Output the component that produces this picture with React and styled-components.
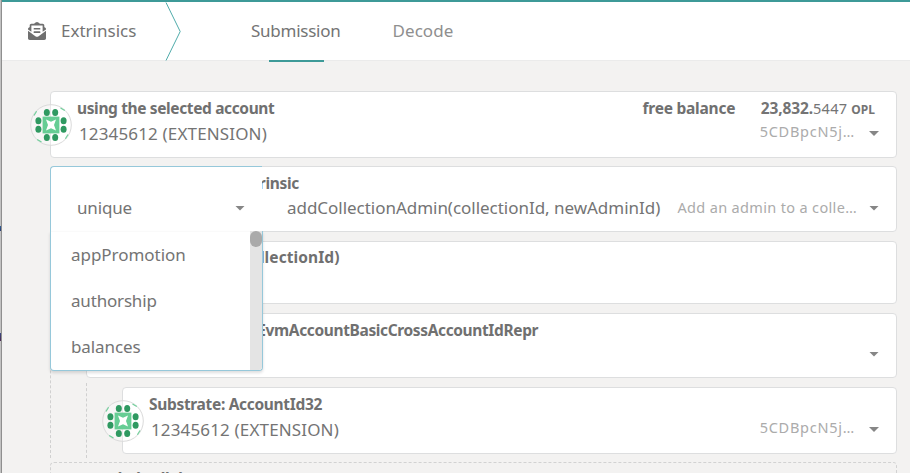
import React from 'react';
import styled, { createGlobalStyle } from 'styled-components';
import { FaEnvelopeOpenText } from 'react-icons/fa';

const GlobalStyle = createGlobalStyle`
  * { box-sizing: border-box; }
  body {
    margin: 0;
    overflow: hidden;
    background: #f3f2f1;
    color: #747474;
    font-family: 'Noto Sans', 'Open Sans', sans-serif;
  }
`;

const Page = styled.div`
  display: grid;
  grid-template-columns: 2px 1fr;
  width: 100%;
  height: 473px;
  overflow: hidden;
`;

const WindowEdge = styled.div`
  border-right: 1px solid #8f8f8f;
  background: linear-gradient(
    #c2c2c2 226px, #2f5f96 226px, #2d3f70 231px, #c2c2c2 231px,
    #c2c2c2 333px, #3a4a86 333px, #4a2850 341px, #c2c2c2 341px
  );
`;

const Main = styled.div`
  min-width: 0;
`;

const Header = styled.header`
  display: flex;
  height: 61px;
  background: #fff;
  border-top: 2px solid #3d9a98;
  border-bottom: 1px solid #ebebeb;
`;

const Section = styled.div`
  display: flex;
  align-items: center;
  width: 163px;
  height: 58px;
  padding-left: 26px;
  gap: 15px;
  font-size: 17px;
  line-height: 24px;
  letter-spacing: 0;

  svg { color: #6f6f6f; }
`;

const Chevron = styled.svg`
  display: block;
  width: 18px;
  height: 59px;
  fill: none;
  stroke: #4fabaa;
`;

const Tabs = styled.nav`
  display: flex;
  gap: 52px;
  margin-left: 68px;
`;

const Tab = styled.a`
  position: relative;
  display: flex;
  align-items: center;
  height: 58px;
  font-size: 17px;
  line-height: 24px;
  letter-spacing: ${(p) => (p.$active ? '-0.25px' : '0.05px')};
  color: ${(p) => (p.$active ? '#747474' : '#8f8f8f')};

  &::after {
    content: '';
    display: ${(p) => (p.$active ? 'block' : 'none')};
    position: absolute;
    left: 17.5px;
    bottom: -2px;
    width: 55px;
    height: 2px;
    background: #3d9a98;
  }
`;

const Content = styled.main`
  padding: 30px 13px 0 48px;
`;

const Card = styled.section`
  position: relative;
  display: flex;
  flex-direction: column;
  height: ${(p) => p.$height}px;
  margin-top: ${(p) => p.$gap || 0}px;
  margin-left: ${(p) => p.$indent || 0}px;
  padding: ${(p) => p.$top ?? 6}px 17px 0 26px;
  background: ${(p) => (p.$dashed ? 'transparent' : '#fff')};
  border: 1px ${(p) => (p.$dashed ? 'dashed #d2d2d2' : 'solid #dddedf')};
  border-radius: 4px;
`;

const Group = styled.div`
  margin-left: ${(p) => p.$indent || 0}px;
  margin-top: ${(p) => p.$gap}px;
  padding: ${(p) => p.$pad || 0};
  border-left: 1px dashed #d0d0d0;
`;

const LabelRow = styled.div`
  display: flex;
  justify-content: space-between;
  height: 20px;
`;

const Label = styled.span`
  padding-left: ${(p) => p.$offset || 0}px;
  font-size: 15.5px;
  font-weight: 700;
  line-height: 20px;
  letter-spacing: ${(p) => p.$spacing}px;
  white-space: nowrap;
  color: #707070;
`;

const Balance = styled.div`
  display: flex;
  align-items: baseline;
  gap: 25.5px;
  margin-right: 4px;
`;

const Amount = styled.span`
  font-size: 14.5px;
  line-height: 20px;
  letter-spacing: 0.3px;

  b { font-size: 15.5px; letter-spacing: -0.12px; }
`;

const Unit = styled.span`
  margin-left: 4px;
  font-size: 12px;
  font-weight: 700;
  letter-spacing: 0;
`;

const ValueRow = styled.div`
  display: flex;
  align-items: center;
  height: 24px;
  margin-top: ${(p) => p.$top}px;
  padding-left: ${(p) => p.$offset || 0}px;
`;

const Value = styled.span`
  flex: 1;
  font-size: 17px;
  line-height: 24px;
  letter-spacing: ${(p) => p.$spacing || 0}px;
  white-space: nowrap;
`;

const Hint = styled.span`
  margin: ${(p) => p.$lift}px ${(p) => p.$right}px 0 0;
  font-size: 14.5px;
  letter-spacing: ${(p) => p.$spacing}px;
  line-height: 24px;
  white-space: nowrap;
  color: #ababab;
`;

const Caret = styled.i`
  width: 10px;
  height: 5px;
  background: #868686;
  clip-path: polygon(0 0, 100% 0, 50% 100%);
`;

const AvatarSvg = styled.svg`
  position: absolute;
  top: 12px;
  left: -21px;
  width: 42px;
  height: 42px;
`;

const Dropdown = styled.div`
  position: absolute;
  z-index: 2;
  top: -1px;
  left: -1px;
  width: 213px;
`;

const DropdownHead = styled.div`
  display: flex;
  align-items: center;
  width: 212px;
  height: 66px;
  padding: 17px 17px 0 26px;
  background: #fff;
  border: 1px solid #96c8da;
  border-width: 1px 0 0 1px;
  border-radius: 4px 0 0 0;
`;

const DropdownList = styled.div`
  display: grid;
  grid-template-columns: 1fr 12px;
  height: 140px;
  margin-top: -1px;
  overflow: hidden;
  background: #fff;
  border: 1px solid #96c8da;
  border-top: 0;
  border-radius: 0 0 4px 4px;
  box-shadow: 0 2px 3px rgba(34, 36, 38, 0.15);
`;

const Options = styled.div`
  border-top: 1px solid #fafafa;
`;

const Option = styled.div`
  height: 46px;
  padding-left: 20px;
  font-size: 17px;
  line-height: 46px;
  letter-spacing: ${(p) => p.$spacing}px;
`;

const Scrollbar = styled.div`
  background: #e4e4e4;

  &::before {
    content: '';
    display: block;
    height: 16px;
    border-radius: 6px;
    background: #aaa;
  }
`;

const DOTS = [-4.2, 4.2];

function Avatar() {
  return (
    <AvatarSvg viewBox="-21 -21 42 42">
      <circle r="20.3" fill="#fff" fillOpacity="0.35" stroke="#dadada" />
      {DOTS.map((d) => (
        <g key={d} fill="#2f9961">
          <ellipse cx={d} cy="-12.6" rx="3" ry="3.5" />
          <ellipse cx={d} cy="12.6" rx="3" ry="3.5" />
          <ellipse cx="-12.6" cy={d} rx="3" ry="3.5" />
          <ellipse cx="12.6" cy={d} rx="3" ry="3.5" />
        </g>
      ))}
      <rect x="-8.4" y="-8.4" width="16.8" height="16.8" fill="#66cd94" />
      <path d="M-5-5.5L0-3.2 5-5.5 3 0 5 5.5 0 3.2-5 5.5-3 0Z" fill="#fff" />
      <path
        d="M-17-9.5L-14.4-13.8M9.5-17L13.8-14.4M17 9.5L14.4 13.8M-9.5 17L-13.8 14.4"
        stroke="#72d09c"
        strokeWidth="1.2"
      />
    </AvatarSvg>
  );
}

function AccountValue() {
  return (
    <ValueRow $top={3.5} $offset={2}>
      <Value $spacing={0.15}>12345612 (EXTENSION)</Value>
      <Hint $spacing={0.75} $right={14} $lift={-5}>5CDBpcN5j…</Hint>
      <Caret />
    </ValueRow>
  );
}

export default function App() {
  return (
    <Page>
      <GlobalStyle />
      <WindowEdge />
      <Main>
        <Header>
          <Section>
            <FaEnvelopeOpenText size={18} />
            <span>Extrinsics</span>
          </Section>
          <Chevron viewBox="0 0 18 59">
            <path d="M1 0.5L15.2 29.5L1 58.5" />
          </Chevron>
          <Tabs>
            <Tab $active>Submission</Tab>
            <Tab>Decode</Tab>
          </Tabs>
        </Header>
        <Content>
          <Card $height={67}>
            <Avatar />
            <LabelRow>
              <Label $spacing={-0.37}>using the selected account</Label>
              <Balance>
                <Label $spacing={-0.23}>free balance</Label>
                <Amount>
                  <b>23,832.</b>5447<Unit>OPL</Unit>
                </Amount>
              </Balance>
            </LabelRow>
            <AccountValue />
          </Card>

          <Card $height={66} $gap={8}>
            <LabelRow>
              <Label $spacing={-0.3}>submit the following extrinsic</Label>
            </LabelRow>
            <ValueRow $top={3} $offset={210}>
              <Value $spacing={-0.03}>addCollectionAdmin(collectionId, newAdminId)</Value>
              <Hint $spacing={0.34} $right={12} $lift={-3}>Add an admin to a colle…</Hint>
              <Caret />
            </ValueRow>
            <Dropdown>
              <DropdownHead>
                <Value $spacing={-0.16}>unique</Value>
                <Caret />
              </DropdownHead>
              <DropdownList>
                <Options>
                  <Option $spacing={-0.04}>appPromotion</Option>
                  <Option $spacing={-0.18}>authorship</Option>
                  <Option $spacing={-0.1}>balances</Option>
                </Options>
                <Scrollbar />
              </DropdownList>
            </Dropdown>
          </Card>

          <Group $gap={9}>
            <Card $height={63} $indent={-1} $top={5}>
              <LabelRow>
                <Label $spacing={0.08} $offset={25}>collectionId: u32 (CollectionId)</Label>
              </LabelRow>
            </Card>
            <Card $height={65} $gap={9} $indent={35}>
              <LabelRow>
                <Label $spacing={-0.37}>newAdminId: PalletEvmAccountBasicCrossAccountIdRepr</Label>
              </LabelRow>
              <ValueRow $top={2}>
                <Value />
                <Caret />
              </ValueRow>
            </Card>
            <Group $indent={35} $gap={5} $pad="4px 0 4px 36px">
              <Card $height={67} $indent={-1}>
                <Avatar />
                <LabelRow>
                  <Label $spacing={-0.32}>Substrate: AccountId32</Label>
                </LabelRow>
                <AccountValue />
              </Card>
            </Group>
          </Group>

          <Card $height={66} $gap={4} $top={5} $dashed>
            <LabelRow>
              <Label $spacing={-0.35}>encoded call data</Label>
            </LabelRow>
          </Card>
        </Content>
      </Main>
    </Page>
  );
}
